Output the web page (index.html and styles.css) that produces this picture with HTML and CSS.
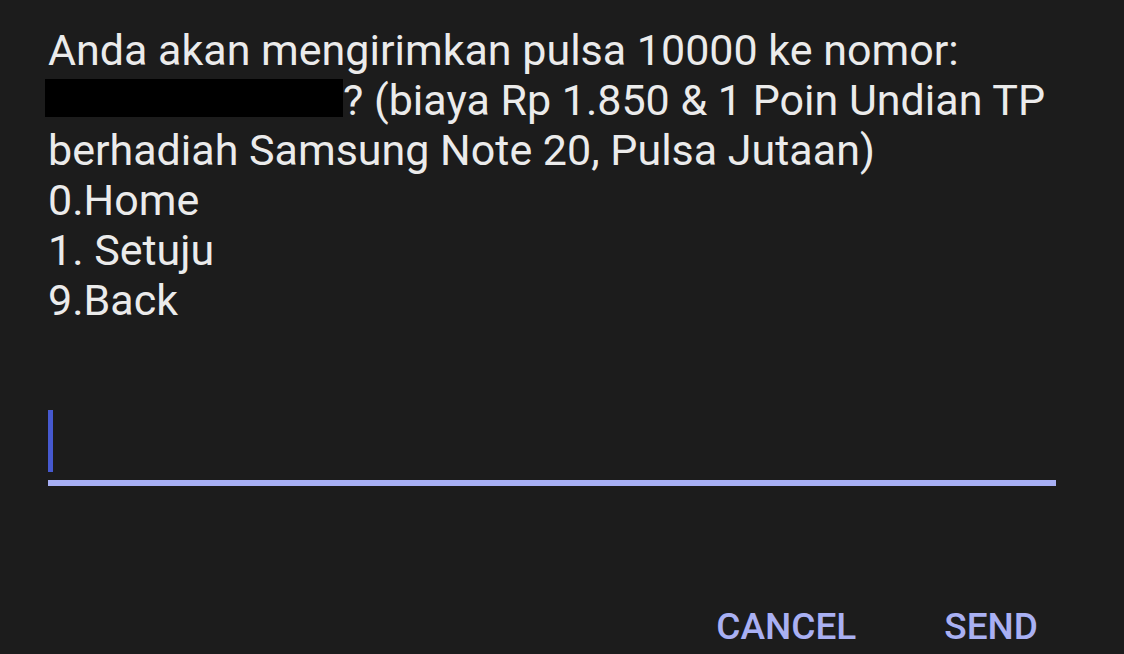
FILE: index.html
```html
<!DOCTYPE html>
<html lang="en">
<head>
    <meta charset="UTF-8">
    <meta name="viewport" content="width=device-width, initial-scale=1.0">
    <title>USSD</title>
    <link rel="stylesheet" href="styles.css">
</head>
<body>
<div class="dialog">
    <div class="message">
        <p>Anda akan mengirimkan pulsa 10000 ke nomor:</p>
        <p><span class="redacted"></span>? (biaya Rp 1.850 &amp; 1 Poin Undian TP</p>
        <p>berhadiah Samsung Note 20, Pulsa Jutaan)</p>
        <p>0.Home</p>
        <p>1. Setuju</p>
        <p>9.Back</p>
    </div>

    <div class="reply">
        <span class="caret"></span>
    </div>

    <div class="actions">
        <button class="btn">CANCEL</button>
        <button class="btn">SEND</button>
    </div>
</div>
</body>
</html>
```

FILE: styles.css
```css
* {
    margin: 0;
    padding: 0;
    box-sizing: border-box;
}

body {
    background: #1c1c1c;
    color: #ebebeb;
    font-family: Roboto, "Noto Sans", sans-serif;
    width: 1124px;
    height: 654px;
    overflow: hidden;
}

.dialog {
    display: flex;
    flex-direction: column;
    height: 100%;
    padding: 25px 68px 0 48px;
}

.message p {
    font-size: 43px;
    line-height: 50px;
    white-space: nowrap;
}

.redacted {
    display: inline-block;
    width: 298px;
    height: 38px;
    margin-left: -3px;
    background: #000;
    vertical-align: -2px;
}

.reply {
    margin-top: 85px;
    height: 76px;
    border-bottom: 6px solid #a7aff4;
    display: flex;
    align-items: flex-end;
}

.caret {
    width: 5px;
    height: 62px;
    margin-bottom: 8px;
    background: #4659cf;
}

.actions {
    margin-top: auto;
    display: flex;
    justify-content: flex-end;
    gap: 88px;
    padding: 0 18px 7px 0;
}

.btn {
    background: none;
    border: none;
    color: #a9b0f3;
    font-family: Roboto, "Noto Sans", sans-serif;
    font-weight: 500;
    font-size: 37px;
    line-height: 40px;
}
```
